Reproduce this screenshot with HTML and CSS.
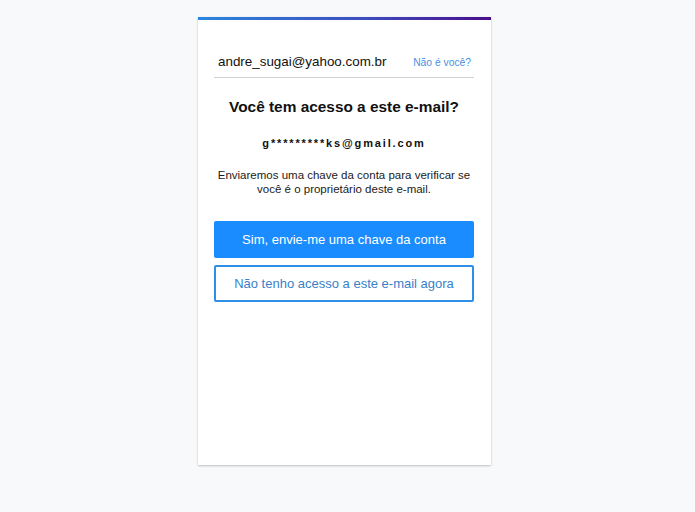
FILE: index.html
```html
<!DOCTYPE html>
<html lang="pt-BR">
<head>
<meta charset="utf-8">
<link rel="stylesheet" href="styles.css">
</head>
<body>
<div class="page">
  <div class="card">
    <div class="topbar"></div>
    <div class="content">
      <div class="account">
        <span class="account-email">andre_sugai@yahoo.com.br</span>
        <a class="not-you" href="#">Não é você?</a>
      </div>
      <h1 class="title">Você tem acesso a este e-mail?</h1>
      <p class="masked">g*********ks@gmail.com</p>
      <p class="desc">Enviaremos uma chave da conta para verificar se você é o proprietário deste e-mail.</p>
      <button class="btn btn-primary">Sim, envie-me uma chave da conta</button>
      <button class="btn btn-secondary">Não tenho acesso a este e-mail agora</button>
    </div>
  </div>
</div>
</body>
</html>
```
FILE: styles.css
```css
html, body {
  margin: 0;
  padding: 0;
  background: #f8f9fb;
  font-family: "Liberation Sans", Arial, sans-serif;
}
.page {
  display: flex;
  justify-content: center;
  padding: 17px 6px 0 0;
  height: 512px;
  box-sizing: border-box;
}
.card {
  width: 293px;
  height: 448px;
  background: #fff;
  box-shadow: 0 1px 2px rgba(0,0,0,0.22), 0 0 1px rgba(0,0,0,0.08);
  display: flex;
  flex-direction: column;
}
.topbar {
  height: 3px;
  background: linear-gradient(to right, #2a86e0, #3d4fc4 55%, #4a0f8c);
}
.content {
  padding: 0 17px 0 16px;
  display: flex;
  flex-direction: column;
}
.account {
  display: flex;
  justify-content: space-between;
  align-items: baseline;
  padding: 34px 3px 8px 4px;
  border-bottom: 1px solid #cfd3d8;
}
.account-email {
  font-size: 13.4px;
  color: #111;
}
.not-you {
  font-size: 10.3px;
  color: #4a90e2;
  text-decoration: none;
}
.title {
  margin: 19px 0 0;
  font-size: 15.4px;
  font-weight: bold;
  text-align: center;
  color: #111;
  line-height: 20px;
}
.masked {
  margin: 19px 0 0;
  font-size: 11px;
  font-weight: bold;
  letter-spacing: 1.85px;
  text-align: center;
  color: #111;
  line-height: 14px;
}
.desc {
  margin: 18px 0 0;
  font-size: 11.5px;
  line-height: 14px;
  text-align: center;
  color: #1b1b1b;
}
.btn {
  display: block;
  width: 100%;
  height: 37px;
  font-family: "Liberation Sans", Arial, sans-serif;
  font-size: 13px;
  border-radius: 2px;
  cursor: pointer;
}
.btn-primary {
  margin-top: 25px;
  background: #1a8cff;
  border: none;
  color: #fff;
}
.btn-secondary {
  margin-top: 7px;
  background: #fff;
  border: 2px solid #2f8fe6;
  color: #3a7fc8;
}
```
